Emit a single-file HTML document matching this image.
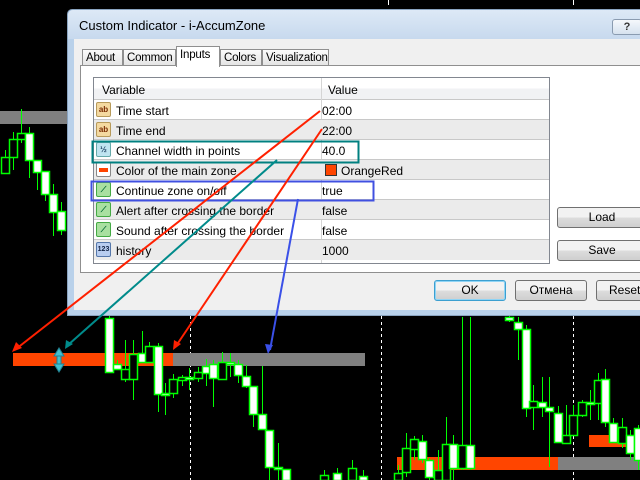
<!DOCTYPE html>
<html><head><meta charset="utf-8"><style>
*{margin:0;padding:0;box-sizing:border-box}
body{width:640px;height:480px;background:#000;position:relative;overflow:hidden;font-family:"Liberation Sans",sans-serif;font-size:12px;color:#000}
.abs{position:absolute}
#dlg{left:67px;top:9px;width:580px;height:307px;background:#b9d1ea;border:1px solid #8aa4c0;border-radius:5px 0 0 0}
#title{left:0;top:0;width:100%;height:29px;background:linear-gradient(#dde9f6,#c7d9ee);border-radius:5px 0 0 0}
#client{left:6px;top:29px;width:574px;height:271px;background:#f0f0f0}
.tab{position:absolute;top:10px;height:17px;background:linear-gradient(#fbfbfb,#e3e3e3);border:1px solid #8f8f8f;border-bottom:none;padding:2px 0 0 3px;font-size:11.5px;white-space:nowrap;overflow:hidden;letter-spacing:-0.2px}
.tab.sel{top:7px;height:21px;background:#fff;z-index:2}
#panel{left:6px;top:26px;width:570px;height:208px;background:#fff;border:1px solid #8f8f8f}
#tbl{left:12px;top:11px;width:457px;height:187px;border:1px solid #828790;background:#fff}
.row{position:absolute;left:0;width:455px;height:20px;border-bottom:1px solid #c8c8c8}
.row span{position:absolute;top:4px}
.v{left:228px}
.n{left:22px}
.ic{position:absolute;left:2px;top:2px;width:15px;height:15px;border:1px solid #b79a5a;border-radius:2px;font-size:8px;line-height:13px;text-align:center;font-weight:bold}
.btn{position:absolute;height:21px;border:1px solid #707070;border-radius:3px;background:linear-gradient(#f2f2f2 50%,#dddddd 50%,#cfcfcf);text-align:center;line-height:19px;font-size:12px}
</style></head><body>
<svg class="abs" style="left:0;top:0" width="640" height="480">
<g stroke="#fff" stroke-width="1" stroke-dasharray="3,3"><line x1="190.5" y1="316" x2="190.5" y2="480"/><line x1="381.5" y1="316" x2="381.5" y2="480"/><line x1="573.5" y1="316" x2="573.5" y2="480"/></g>
<line x1="388.5" y1="0" x2="388.5" y2="5" stroke="#fff"/><line x1="573.5" y1="0" x2="573.5" y2="5" stroke="#fff"/>
<rect x="0" y="111" width="67" height="13" fill="#808080"/>
<rect x="13" y="353" width="160" height="13" fill="#ff4500"/>
<rect x="173" y="353" width="192" height="13" fill="#808080"/>
<rect x="397" y="457" width="161" height="13" fill="#ff4500"/>
<rect x="558" y="457" width="82" height="13" fill="#808080"/>
<rect x="589" y="435" width="51" height="12" fill="#ff4500"/>
<g stroke="#00ff00" stroke-width="1" fill="#fff" id="c"></g>
</svg>
<div id="dlg" class="abs">
 <div id="title" class="abs"><span class="abs" style="left:11px;top:8px;font-size:13px">Custom Indicator - i-AccumZone</span>
  <div class="abs" style="left:544px;top:9px;width:30px;height:16px;border:1px solid #8a9bb0;border-radius:3px;background:linear-gradient(#f5f8fc,#d6e2ef);text-align:center;font-weight:bold;font-size:11px;line-height:14px;color:#333">?</div></div>
 <div id="client" class="abs">
  <div class="tab" style="left:8px;width:41px">About</div>
  <div class="tab" style="left:49px;width:53px">Common</div>
  <div class="tab sel" style="left:102px;width:44px">Inputs</div>
  <div class="tab" style="left:146px;width:42px">Colors</div>
  <div class="tab" style="left:188px;width:67px">Visualization</div>
  <div id="panel" class="abs">
   <div id="tbl" class="abs">
    <div class="row" style="top:0;height:22px;background:linear-gradient(#fff 50%,#f1f2f4 50%)"><span style="left:8px;top:5px">Variable</span><span style="left:234px;top:5px">Value</span></div>
    <div class="abs" style="left:227px;top:0;width:1px;height:185px;background:#d5d5d5"></div>
    <div class="row" style="top:22px"><div class="ic" style="background:#f4d9a0;color:#7a2a00">ab</div><span class="n">Time start</span><span class="v">02:00</span></div>
    <div class="row" style="top:42px;background:#ebebeb"><div class="ic" style="background:#f4d9a0;color:#7a2a00">ab</div><span class="n">Time end</span><span class="v">22:00</span></div>
    <div class="row" style="top:62px"><div class="ic" style="background:#bfe4f0;border-color:#6aa;color:#246">½</div><span class="n">Channel width in points</span><span class="v">40.0</span></div>
    <div class="row" style="top:82px;background:#ebebeb"><div class="ic" style="background:#fff;border-color:#888"><div style="margin:5px 2px;height:4px;background:#f40"></div></div><span class="n">Color of the main zone</span><div class="abs" style="left:231px;top:4px;width:12px;height:12px;background:#ff4500;border:1px solid #333"></div><span style="left:247px">OrangeRed</span></div>
    <div class="row" style="top:102px"><div class="ic" style="background:#a9e0a0;border-color:#4a4;color:#063">⟋</div><span class="n">Continue zone on/off</span><span class="v">true</span></div>
    <div class="row" style="top:122px;background:#ebebeb"><div class="ic" style="background:#a9e0a0;border-color:#4a4;color:#063">⟋</div><span class="n">Alert after crossing the border</span><span class="v">false</span></div>
    <div class="row" style="top:142px"><div class="ic" style="background:#a9e0a0;border-color:#4a4;color:#063">⟋</div><span class="n">Sound after crossing the border</span><span class="v">false</span></div>
    <div class="row" style="top:162px;background:#ebebeb;border-bottom:none"><div class="ic" style="background:#b8cdf0;border-color:#57a;color:#124;font-size:7px">123</div><span class="n">history</span><span class="v">1000</span></div>
   </div>
   <div class="btn" style="left:476px;top:141px;width:90px">Load</div>
   <div class="btn" style="left:476px;top:174px;width:90px">Save</div>
  </div>
  <div class="btn" style="left:360px;top:241px;width:72px;border-color:#3c9fd0;box-shadow:inset 0 0 0 1px #8fd4f5">OK</div>
  <div class="btn" style="left:441px;top:241px;width:72px">Отмена</div>
  <div class="btn" style="left:522px;top:241px;width:72px;text-align:left;padding-left:12px">Reset</div>
 </div>
</div>
<svg class="abs" style="left:0;top:0" width="640" height="480">
<rect x="92.5" y="141.5" width="266" height="21" fill="none" stroke="#008080" stroke-width="2"/>
<rect x="91.5" y="181.5" width="282" height="19" fill="none" stroke="#4050e0" stroke-width="2"/>
<g stroke-width="2" fill="none">
<line x1="320" y1="111" x2="16" y2="349" stroke="#ff2000"/>
<line x1="322" y1="129" x2="176" y2="346" stroke="#ff2000"/>
<line x1="277" y1="160" x2="68" y2="345" stroke="#008b8b"/>
<line x1="298" y1="199" x2="270" y2="350" stroke="#3a50e8"/>
</g>
<polygon points="12,352 16,342 22,348" fill="#ff2000"/>
<polygon points="173,350 174,340 181,344" fill="#ff2000"/>
<polygon points="65,349 66,340 73,344" fill="#008b8b"/>
<polygon points="268,354 265,344 273,345" fill="#3a50e8"/>
<g fill="#40c0d0" stroke="#208090"><rect x="57" y="352" width="4" height="16"/><polygon points="54,356 59,348 64,356"/><polygon points="54,364 59,372 64,364"/></g>
</svg>
<script>
var d=[[5,150,172,157,173,0],[13,132,170,139,157,0],[21,109,143,133,139,0],[29,127,178,133,160,1],[37,160,190,160,172,1],[45,171,201,171,194,1],[53,184,236,194,212,1],[61,202,235,211,230,1],
[109,316,372,318,372,1],[117,360,370,364,369,1],[125,340,382,369,379,0],[133,340,400,354,379,0],[142,331,362,353,362,1],[149,342,362,346,362,0],[158,343,412,346,394,1],[165,383,415,393,395,1],[173,374,398,379,393,0],[182,375,386,377,380,0],[189,368,390,377,379,1],[198,367,382,372,378,0],[206,359,386,366,373,1],[213,360,407,364,378,1],[222,352,380,362,379,0],[230,353,377,362,364,1],[238,360,383,364,375,1],[246,365,388,376,386,1],[253,386,427,386,414,1],[262,366,430,414,429,1],[269,430,480,430,467,1],[278,443,480,467,469,1],[286,469,480,469,480,1],
[324,470,480,475,480,0],[337,468,480,473,480,1],[352,460,480,468,480,0],[363,470,480,476,480,1],
[398,465,480,473,480,0],[406,433,477,448,472,0],[414,436,460,439,449,0],[422,435,463,441,459,1],[429,458,480,460,477,1],[438,450,480,470,480,0],[446,417,480,444,480,0],[453,435,480,444,468,1],[462,317,470,445,468,0],[470,317,470,445,468,1],
[509,316,322,317,320,1],[518,317,360,322,329,1],[526,325,417,329,408,1],[533,385,430,401,407,0],[542,377,417,402,407,1],[549,377,467,407,411,1],[558,406,442,413,442,1],[566,405,435,435,443,0],[573,405,428,415,435,0],[582,400,417,402,415,0],[590,390,420,402,403,1],[598,373,420,380,403,0],[605,369,427,379,422,1],[613,418,443,423,442,1],[622,418,448,427,443,0],[630,430,460,435,453,1],[638,425,470,428,460,1]];
var g=document.getElementById('c'),s='';
d.forEach(function(c){s+='<line x1="'+(c[0]+.5)+'" y1="'+c[1]+'" x2="'+(c[0]+.5)+'" y2="'+c[2]+'"/>';s+='<rect x="'+(c[0]-3.5)+'" y="'+(c[3]+.5)+'" width="8" height="'+Math.max(2,c[4]-c[3])+'" fill="'+(c[5]?'#fff':'#000')+'" stroke-width="1.5"/>';});
g.innerHTML=s;
</script>
</body></html>
